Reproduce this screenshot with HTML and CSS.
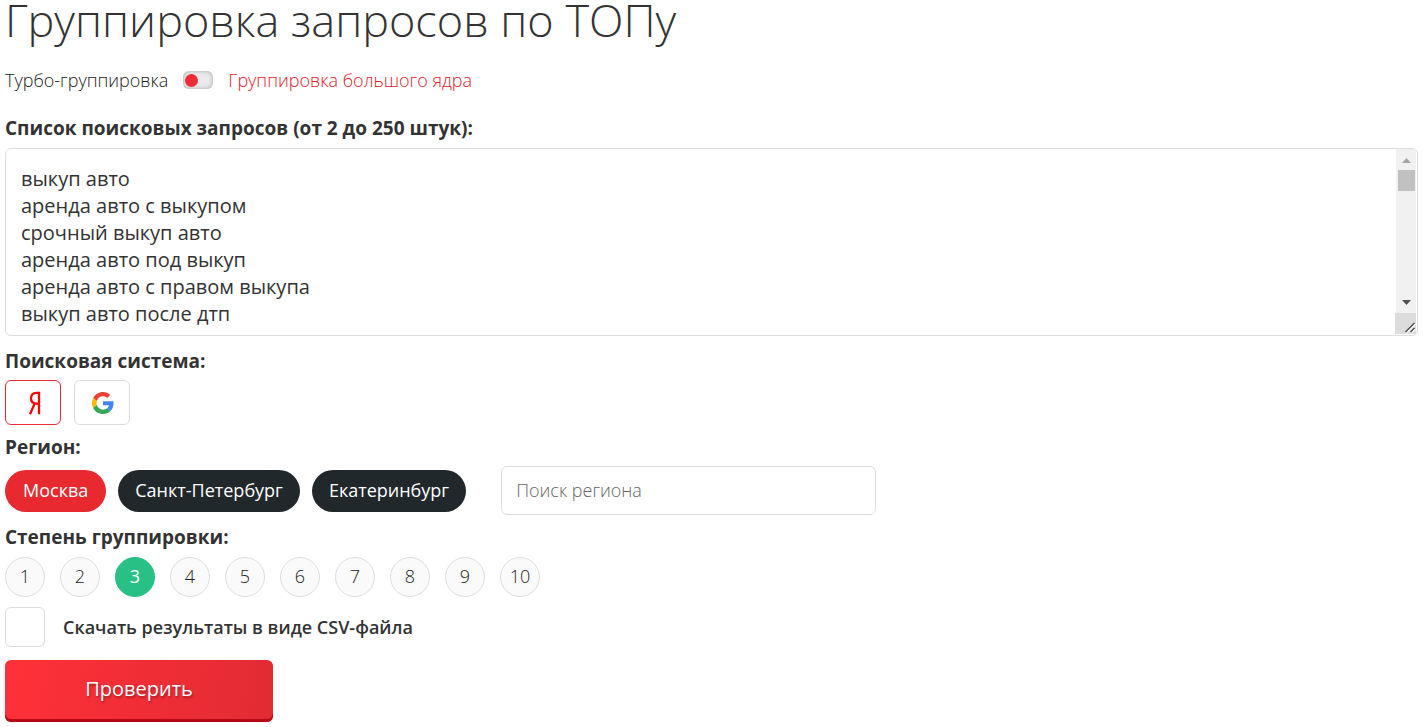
FILE: index.html
```html
<!DOCTYPE html>
<html lang="ru">
<head>
    <meta charset="UTF-8">
    <meta name="viewport" content="width=device-width, initial-scale=1.0">
    <title>Группировка запросов по ТОПу</title>
    <link rel="stylesheet" href="styles.css">
</head>
<body>
    <form class="tool">
        <h1 class="title">Группировка запросов по ТОПу</h1>

        <div class="mode">
            <label for="turbo">Турбо-группировка</label>
            <input type="checkbox" class="switch" id="turbo">
            <a href="#big">Группировка большого ядра</a>
        </div>

        <label class="caption" for="queries">Список поисковых запросов (от 2 до 250 штук):</label>
        <div class="queries-wrap">
            <textarea class="queries" id="queries">выкуп авто
аренда авто с выкупом
срочный выкуп авто
аренда авто под выкуп
аренда авто с правом выкупа
выкуп авто после дтп
</textarea>
            <svg class="scroll" width="21" height="186" viewBox="0 0 21 186" aria-hidden="true">
                <rect x="1" width="20" height="164" fill="#f1f1f1"/>
                <path d="M7 14h9l-4.500-5z" fill="#a3a3a3"/>
                <rect x="3" y="21" width="17" height="21" fill="#c1c1c1"/>
                <path d="M7 151h9l-4.500 5z" fill="#505050"/>
                <rect y="164" width="21" height="21" fill="#dcdcdc"/>
                <path d="M10.500 183l9-9M15.500 183l4-4" stroke="#fff" stroke-width="1.500" transform="translate(1 1)"/>
                <path d="M10.500 183l9-9M15.500 183l4-4" stroke="#505050" stroke-width="1.500"/>
            </svg>
        </div>

        <fieldset class="group">
            <legend class="caption">Поисковая система:</legend>
            <div class="engines">
                <button type="button" class="engine active" aria-label="Яндекс">
                    <svg width="14" height="24" viewBox="0 0 14 24">
                        <path d="M12 23.300V1.800H9.500C6 1.800 4 3.700 4 7.300c0 3.500 2 5.300 5.300 5.300H12M7.600 12.600L3 23.300" fill="none" stroke="#f00" stroke-width="2.300"/>
                    </svg>
                </button>
                <button type="button" class="engine" aria-label="Google">
                    <svg width="22" height="22" viewBox="0 0 48 48">
                        <path fill="#EA4335" d="M24 9.500c3.540 0 6.710 1.220 9.210 3.600l6.850-6.850C35.900 2.380 30.470 0 24 0 14.620 0 6.510 5.380 2.560 13.220l7.980 6.190C12.430 13.720 17.740 9.500 24 9.500z"/>
                        <path fill="#4285F4" d="M46.980 24.550c0-1.570-.15-3.090-.38-4.550H24v9.020h12.940c-.58 2.960-2.260 5.480-4.780 7.180l7.730 6c4.510-4.180 7.090-10.360 7.090-17.650z"/>
                        <path fill="#FBBC05" d="M10.530 28.590c-.48-1.450-.76-2.990-.76-4.590s.27-3.140.76-4.590l-7.980-6.190C.92 16.460 0 20.120 0 24c0 3.880.92 7.540 2.560 10.780l7.970-6.190z"/>
                        <path fill="#34A853" d="M24 48c6.480 0 11.930-2.130 15.890-5.810l-7.730-6c-2.150 1.450-4.920 2.300-8.160 2.300-6.260 0-11.570-4.220-13.470-9.910l-7.980 6.190C6.510 42.620 14.620 48 24 48z"/>
                    </svg>
                </button>
            </div>
        </fieldset>

        <fieldset class="group">
            <legend class="caption">Регион:</legend>
            <div class="regions">
                <button type="button" class="region active">Москва</button>
                <button type="button" class="region">Санкт-Петербург</button>
                <button type="button" class="region">Екатеринбург</button>
                <input type="text" class="search" placeholder="Поиск региона" aria-label="Поиск региона">
            </div>
        </fieldset>

        <fieldset class="group">
            <legend class="caption">Степень группировки:</legend>
            <div class="levels">
                <button type="button" class="level">1</button>
                <button type="button" class="level">2</button>
                <button type="button" class="level active">3</button>
                <button type="button" class="level">4</button>
                <button type="button" class="level">5</button>
                <button type="button" class="level">6</button>
                <button type="button" class="level">7</button>
                <button type="button" class="level">8</button>
                <button type="button" class="level">9</button>
                <button type="button" class="level">10</button>
            </div>
        </fieldset>

        <div class="csv">
            <input type="checkbox" class="check" id="csv">
            <label for="csv">Скачать результаты в виде CSV-файла</label>
        </div>

        <button type="submit" class="submit">Проверить</button>
    </form>
</body>
</html>
```
FILE: styles.css
```css
* {
    box-sizing: border-box;
}

body {
    margin: 0;
    background: #fff;
    color: #333;
    font-family: "Open Sans", sans-serif;
    font-size: 18px;
    font-weight: 300;
    line-height: 24px;
}

button, input, textarea {
    font: inherit;
    color: inherit;
    margin: 0;
}

button {
    padding: 0;
    cursor: pointer;
}

a {
    color: #e0202a;
    text-decoration: none;
}

.tool {
    padding: 0 5px;
}

.title {
    margin: 0 0 28px;
    font-size: 45px;
    font-weight: 300;
    line-height: 40px;
}

.mode {
    display: flex;
    align-items: center;
    gap: 15px;
    margin-bottom: 24px;
    color: #222;
}

.switch {
    appearance: none;
    display: flex;
    align-items: center;
    width: 30px;
    height: 18px;
    padding: 2px;
    border-radius: 6px;
    background: #ebebeb;
    box-shadow: inset 0 0 4px rgba(0, 0, 0, 0.3);
}

.switch::before {
    content: "";
    width: 13px;
    height: 13px;
    border-radius: 50%;
    background: #ef2b35;
}

.switch:checked {
    justify-content: flex-end;
}

.caption {
    display: block;
    padding: 0;
    font-size: 19px;
    font-weight: 700;
}

.queries-wrap {
    position: relative;
    margin: 8px 0 13px;
}

.queries {
    display: block;
    width: 100%;
    height: 188px;
    padding: 16px 15px;
    border: 1px solid #ddd;
    border-radius: 6px;
    font-size: 20px;
    font-weight: 400;
    line-height: 27px;
    resize: vertical;
    overflow: hidden;
}

.scroll {
    position: absolute;
    top: 1px;
    right: 2px;
}

.group {
    min-width: 0;
    margin: 0 0 10px;
    padding: 0;
    border: 0;
}

.engines {
    display: flex;
    gap: 13px;
    margin-top: 7px;
}

.engine {
    display: flex;
    align-items: center;
    justify-content: center;
    width: 56px;
    height: 45px;
    padding-left: 1px;
    border: 1px solid #ddd;
    border-radius: 6px;
    background: #fff;
}

.engine.active {
    border-color: #e62b34;
}

.regions {
    display: flex;
    flex-wrap: wrap;
    align-items: center;
    gap: 12px;
    margin-top: 7px;
}

.region {
    height: 42px;
    padding: 0 17px 1px;
    border: 0;
    border-radius: 21px;
    background: #21282c;
    color: #fff;
    font-weight: 400;
}

.region.active {
    padding: 0 18px 1px;
    background: #e8292f;
}

.search {
    width: 375px;
    height: 49px;
    margin-left: 23px;
    padding: 0 14px 1px;
    border: 1px solid #ddd;
    border-radius: 6px;
}

.search::placeholder {
    color: #666;
}

.levels {
    display: flex;
    flex-wrap: wrap;
    gap: 15px;
    margin-top: 8px;
}

.level {
    width: 40px;
    height: 40px;
    padding-bottom: 2px;
    border: 1px solid #ddd;
    border-radius: 50%;
    background: #fafafa;
    color: #222;
}

.level.active {
    border-color: #29c086;
    background: #29c086;
    color: #fff;
    font-weight: 400;
}

.csv {
    display: flex;
    align-items: center;
    gap: 18px;
    margin-bottom: 13px;
    font-weight: 600;
}

.check {
    appearance: none;
    width: 40px;
    height: 40px;
    border: 1px solid #ddd;
    border-radius: 6px;
    background: #fff;
}

.check:checked {
    background: #29c086;
}

.submit {
    width: 268px;
    height: 62px;
    padding-bottom: 4px;
    border: 0;
    border-radius: 6px;
    background: linear-gradient(100deg, #ff3038, #e22b34);
    box-shadow: inset 0 -3px 0 #b50a13;
    color: #fff;
    font-size: 20px;
    font-weight: 400;
    text-shadow: 1px 2px 2px rgba(0, 0, 0, 0.3);
}
```
